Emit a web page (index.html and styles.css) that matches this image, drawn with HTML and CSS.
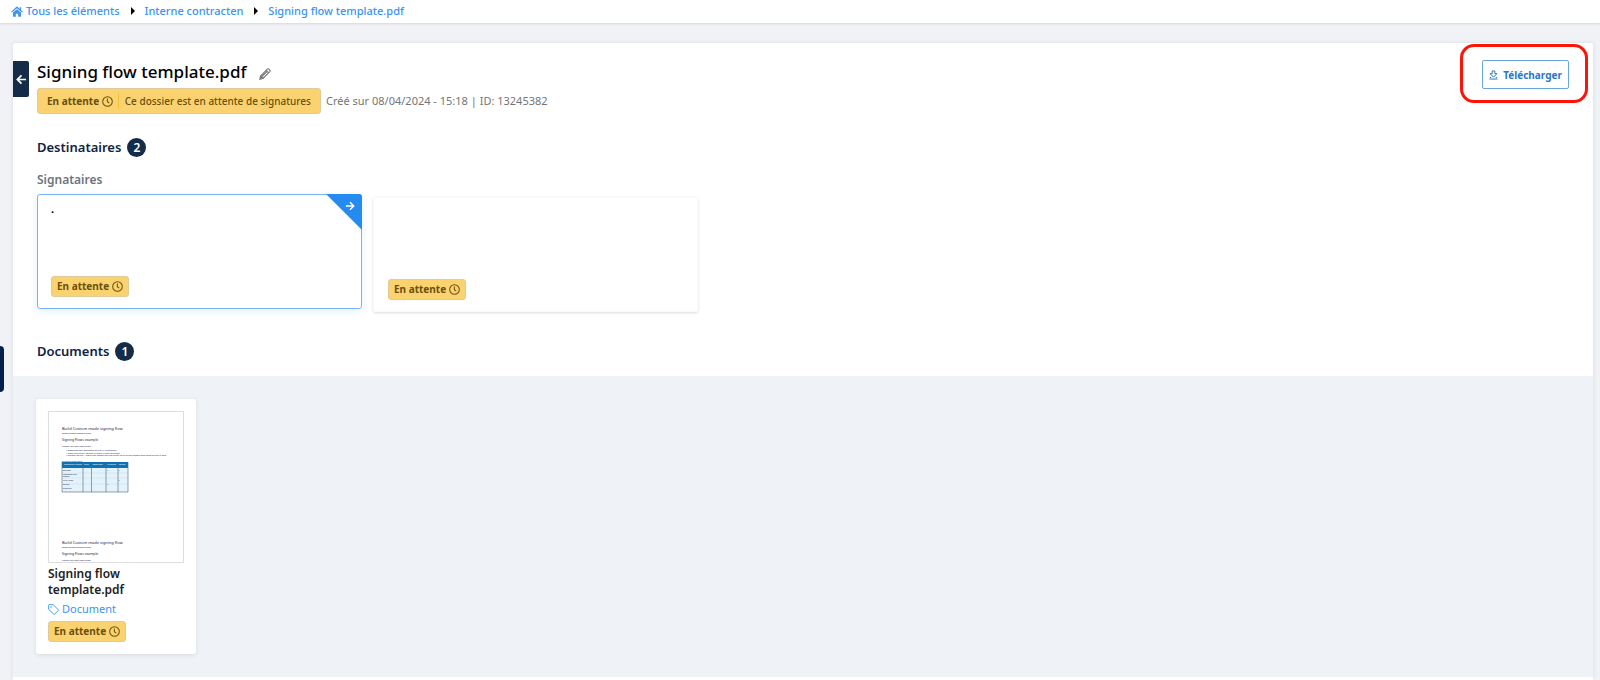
FILE: index.html
```
<!DOCTYPE html>
<html lang="fr">
<head>
	<title>Signing flow template.pdf</title>
	<meta charset="utf-8">
	<meta name="viewport" content="width=device-width, initial-scale=1">
	<link rel="stylesheet" href="styles.css">
</head>
<body>
	<svg class="sprite" aria-hidden="true">
		<symbol id="clock" viewBox="0 0 16 16">
			<circle cx="8" cy="8" r="7" fill="none" stroke="currentColor" stroke-width="1.5"/>
			<path d="M7.8 3.6v4.800l2.800 2" fill="none" stroke="currentColor" stroke-width="1.5"/>
		</symbol>
	</svg>

	<nav class="breadcrumb">
		<a href="#">
			<svg class="home" viewBox="0 0 18 16"><path fill="currentColor" d="M9 4.6 3 9.6V15q0 .7.7.7h3.5v-4.4h3.6v4.4h3.5q.7 0 .7-.7V9.6zM.3 8.300l1.100 1.200L9 3.200l7.600 6.300 1.100-1.200-2.500-2.100V1.500h-2.200v2.900L9.800 1Q9 .3 8.200 1z"/></svg>
			Tous les éléments
		</a>
		<span class="sep"></span>
		<a href="#">Interne contracten</a>
		<span class="sep"></span>
		<a href="#">Signing flow template.pdf</a>
	</nav>

	<button class="drawer" aria-label="Menu"></button>

	<main class="panel">
		<button class="back" aria-label="Retour">
			<svg viewBox="0 0 12 12"><path d="M11 6H1.800M6 1.500 1.500 6 6 10.500" fill="none" stroke="currentColor" stroke-width="1.900"/></svg>
		</button>

		<header class="head">
			<div>
				<div class="title">
					<h1>Signing flow template.pdf</h1>
					<button class="edit" aria-label="Modifier">
						<svg viewBox="0 0 12 12"><path d="M.8 11.200 1.500 8 8.300 1.200q.8-.7 1.600 0l.9.9q.7.800 0 1.600L4 10.500zM1.500 8 4 10.500M7.200 2.300l2.500 2.500M3 8.500l5-5" fill="none" stroke="currentColor" stroke-width="1.100"/></svg>
					</button>
				</div>
				<div class="meta">
					<div class="status">
						<b>En attente <svg class="clock"><use href="#clock"/></svg></b>
						<span>Ce dossier est en attente de signatures</span>
					</div>
					<span class="created">Créé sur 08/04/2024 - 15:18 | ID: 13245382</span>
				</div>
			</div>
			<div class="highlight">
				<button class="download">
					<svg viewBox="0 0 10 11"><path d="M3.500 1h3v3h2.300L5 7.900 1.200 4h2.300zM.5 10h9M.9 8.200h1.600M7.500 8.200h1.600" fill="none" stroke="currentColor" stroke-width="1.100"/></svg>
					Télécharger
				</button>
			</div>
		</header>

		<section class="recipients">
			<h2>Destinataires <span class="count">2</span></h2>
			<h3>Signataires</h3>
			<div class="signers">
				<article class="signer active">
					<p>.</p>
					<span class="badge">En attente <svg class="clock"><use href="#clock"/></svg></span>
					<a class="corner" href="#" aria-label="Ouvrir">
						<svg viewBox="0 0 12 12"><path d="M1 6h9.500M6 1.500 10.500 6 6 10.500" fill="none" stroke="currentColor" stroke-width="1.700"/></svg>
					</a>
				</article>
				<article class="signer">
					<span class="badge">En attente <svg class="clock"><use href="#clock"/></svg></span>
				</article>
			</div>
			<h2 class="docs-title">Documents <span class="count">1</span></h2>
		</section>

		<section class="documents">
			<article class="doc">
				<svg class="thumb" viewBox="0 0 134 150">
					<defs>
						<g id="intro" fill="#1c2450">
							<text x="13" y="18" font-size="4">Build Custom made signing flow</text>
							<text x="13" y="21.500" font-size="2.400">www.dummydomain.com</text>
							<text x="13" y="29" font-size="3.400">Signing Flows example</text>
							<text x="13" y="34.500" font-size="2.200">Create your own flow below:</text>
						</g>
					</defs>
					<use href="#intro"/>
					<g fill="#1c2450" font-size="2.300">
						<text x="17" y="39">•  Download the document and fill it in together</text>
						<text x="17" y="41.500">•  Make sure every person is listed in the right step</text>
						<text x="17" y="44">•  Upload the file – check the names and the order of all of the people who have to sign it here</text>
						<text x="13" y="49.500">Example flow table</text>
					</g>
					<path fill="#e4f3fb" d="M13 50h66v30H13z"/>
					<path fill="#0b72b5" d="M13 50h66v6H13z"/>
					<path d="M13 61h66M13 66h66M13 72h66" stroke="#bcd3df" stroke-width=".4"/>
					<path d="M13 50v30h66V50M34 50v30M42.500 50v30M57 50v30M69 50v30" fill="none" stroke="#4c6678" stroke-width=".6"/>
					<g fill="#fff" font-size="2.400">
						<text x="15" y="53">Company name</text><text x="35" y="53">Role</text><text x="43.500" y="53">Required</text><text x="58" y="53">Number</text><text x="70" y="53">Order</text>
					</g>
					<g fill="#1c2450" font-size="2.400">
						<text x="14" y="58.500">Sender</text><text x="58" y="58.500">x</text><text x="69.500" y="58.500">x</text>
						<text x="14" y="62.500">Responsible</text><text x="14" y="65">name</text>
						<text x="14" y="68.500">First step</text><text x="69.500" y="68.500">x</text>
						<text x="14" y="73">Other</text><text x="58" y="73">x</text>
						<text x="14" y="77">Signing</text>
					</g>
					<use href="#intro" y="114"/>
				</svg>
				<h4>Signing flow template.pdf</h4>
				<a class="tag" href="#">
					<svg viewBox="0 0 12 12"><path d="M.7 1.400q0-.7.7-.7h4.400l5.300 5.500q.4.500 0 1l-3.900 3.900q-.5.400-1 0L.7 5.800z" fill="none" stroke="currentColor"/><circle cx="3.200" cy="3.200" r=".8" fill="currentColor"/></svg>
					Document
				</a>
				<span class="badge">En attente <svg class="clock"><use href="#clock"/></svg></span>
			</article>
		</section>
	</main>
</body>
</html>
```

FILE: styles.css
```
* {
	box-sizing: border-box;
}

body {
	margin: 0;
	min-height: 100vh;
	display: flex;
	flex-direction: column;
	background: #f0f2f6;
	color: #000;
	font: 11px/16px "Noto Sans", sans-serif;
}

h1, h2, h3, h4, p {
	margin: 0;
}

a {
	color: #3a94f2;
	text-decoration: none;
}

button {
	padding: 0;
	border: none;
	background: none;
	font: inherit;
	cursor: pointer;
}

.sprite {
	position: absolute;
	width: 0;
	height: 0;
}

.breadcrumb {
	display: flex;
	align-items: center;
	height: 23px;
	padding: 0 11px 1px;
	background: #fff;
	box-shadow: 0 1px 2px #d4d7dc;
	font-weight: 500;
}

.breadcrumb a {
	display: flex;
	align-items: center;
	gap: 3px;
}

.home {
	width: 12px;
	height: 11px;
}

.sep {
	margin: 0 10px 0 11px;
	border: 4px solid transparent;
	border-left-color: #000;
	border-right: none;
}

/* handle of the closed side menu */
.drawer {
	position: absolute;
	left: 0;
	top: 346px;
	width: 4px;
	height: 46px;
	border-radius: 0 5px 5px 0;
	background: #06204d;
}

.panel {
	position: relative;
	flex: 1;
	margin: 20px 7px 0 13px;
	border-radius: 3px 3px 0 0;
	background: #fff;
	box-shadow: 0 0 4px #d9dce2;
}

.back {
	position: absolute;
	left: 0;
	top: 18px;
	width: 16px;
	height: 36px;
	display: flex;
	align-items: center;
	justify-content: center;
	border-radius: 0 2px 2px 0;
	background: #142c47;
	color: #fff;
}

.back svg {
	width: 11px;
	height: 11px;
}

.head {
	display: flex;
	justify-content: space-between;
	padding: 1px 5px 0 24px;
}

.title {
	display: flex;
	align-items: center;
	gap: 12px;
	padding-top: 16px;
}

h1 {
	font-size: 17px;
	font-weight: 500;
	line-height: 24px;
}

.edit {
	display: flex;
	padding-top: 4px;
	color: #777;
}

.edit svg {
	width: 12px;
	height: 12px;
}

.meta {
	display: flex;
	align-items: center;
	gap: 5px;
	margin-top: 4px;
}

.status, .badge {
	border: 1px solid #e0cb98;
	border-radius: 3px;
	background: #fad370;
	color: #6b4f0c;
	font-size: 10px;
}

.status {
	display: flex;
	align-items: center;
	height: 26px;
	padding: 0 9px;
	font-weight: 500;
}

.status b {
	padding-right: 5px;
	border-right: 1px solid #f5bf3a;
	font-weight: 700;
}

.status span {
	padding-left: 6px;
}

.clock {
	width: 11px;
	height: 11px;
	vertical-align: -2px;
}

.created {
	color: #757575;
}

.highlight {
	height: 59px;
	padding: 13px 16px 0 19px;
	border: 3px solid #fb1508;
	border-radius: 14px;
}

.download {
	display: flex;
	align-items: center;
	gap: 5px;
	height: 29px;
	padding: 0 6px;
	border: 1px solid #68a8e0;
	border-radius: 2px;
	background: #fff;
	color: #2878c8;
	font-size: 10px;
	font-weight: 700;
}

.download svg {
	width: 9px;
	height: 10px;
}

.recipients {
	padding: 23px 24px 15px;
}

h2 {
	display: flex;
	align-items: center;
	gap: 6px;
	color: #10233f;
	font-size: 13px;
	font-weight: 600;
	line-height: 20px;
}

.count {
	width: 19px;
	height: 19px;
	border-radius: 50%;
	background: #142c47;
	color: #fff;
	font-size: 12px;
	line-height: 19px;
	text-align: center;
}

h3 {
	margin-top: 15px;
	color: #6c757d;
	font-size: 12px;
	font-weight: 600;
	line-height: 16px;
}

.signers {
	display: flex;
	align-items: flex-start;
	gap: 11px;
	margin-top: 6px;
}

.signer {
	position: relative;
	display: flex;
	flex-direction: column;
	align-items: flex-start;
	width: 325px;
	height: 115px;
	margin-top: 3px;
	padding: 6px 14px 11px;
	border: 1px solid #fafafa;
	border-radius: 3px;
	box-shadow: 0 1px 3px #dcdcdc;
	font-weight: 700;
}

.signer.active {
	margin-top: 0;
	padding-left: 13px;
	border-color: #78b5f6;
	box-shadow: 0 2px 8px #e3effb;
}

.signer .badge {
	margin-top: auto;
}

.badge {
	height: 21px;
	padding: 0 5px;
	font-weight: 700;
	line-height: 18px;
}

.corner {
	position: absolute;
	top: -1px;
	right: -1px;
	width: 36px;
	height: 36px;
	padding: 5px 7px 0 0;
	border-top-right-radius: 3px;
	background: #258bf0;
	clip-path: polygon(0 0, 100% 0, 100% 100%);
	color: #fff;
	text-align: right;
}

.corner svg {
	width: 10px;
	height: 10px;
}

.docs-title {
	margin-top: 29px;
}

.documents {
	padding: 23px;
	background: #eff3f7;
}

.doc {
	display: flex;
	flex-direction: column;
	align-items: flex-start;
	width: 160px;
	padding: 12px;
	border-radius: 3px;
	background: #fff;
	box-shadow: 0 1px 4px #d6dade;
}

.thumb {
	width: 136px;
	height: 152px;
	border: 1px solid #ddd;
}

h4 {
	margin-top: 3px;
	color: #222;
	font-size: 12px;
	font-weight: 600;
	line-height: 16px;
}

.tag {
	display: flex;
	align-items: center;
	gap: 3px;
	margin: 3px 0 4px;
}

.tag svg {
	width: 11px;
	height: 11px;
}
```
